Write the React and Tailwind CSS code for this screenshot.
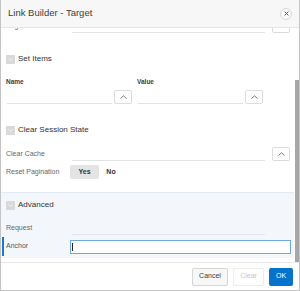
import React from "react";

const ChevronUp = () => (
    <svg width="7" height="4" viewBox="0 0 7 4" fill="none">
        <path d="M0.5 3.5 L3.5 0.8 L6.5 3.5" stroke="#6b6b6b" strokeWidth="0.9" />
    </svg>
);

const UpButton = () => (
    <button className="w-[18px] h-[14px] shrink-0 flex items-center justify-center border border-[#dcdcdc] rounded-[2px] bg-white">
        <ChevronUp />
    </button>
);

const SectionHeader = ({ title }) => (
    <div className="flex items-center h-[10px] pl-[5px] gap-[3px]">
        <div className="w-[9px] h-[9px] rounded-[1px] bg-[#d9d9d9] flex items-center justify-center">
            <svg width="5" height="3" viewBox="0 0 5 3" fill="none">
                <path d="M0.4 0.4 L2.5 2.5 L4.6 0.4" stroke="#f4f4f4" strokeWidth="0.9" />
            </svg>
        </div>
        <span className="text-[8px] text-[#333]">{title}</span>
    </div>
);

const FieldRow = ({ label, className = "" }) => (
    <div className={"flex items-center h-[14px] pl-[5px] pr-[4px] " + className}>
        <span className="w-[64px] shrink-0 text-[7px] text-[#666]">{label}</span>
        <div className="self-stretch flex-1 ml-[2px] border-b border-[#e3e3e3]" />
        <div className="w-[7px] shrink-0" />
        <div className="w-[18px] shrink-0" />
    </div>
);

const FieldRowWithButton = ({ label, className = "" }) => (
    <div className={"flex items-center h-[14px] pl-[5px] pr-[4px] " + className}>
        <span className="w-[64px] shrink-0 text-[7px] text-[#666]">{label}</span>
        <div className="self-stretch flex-1 ml-[2px] border-b border-[#e3e3e3]" />
        <div className="w-[7px] shrink-0" />
        <UpButton />
    </div>
);

const ItemColumn = () => (
    <div className="w-[126px] flex items-center gap-[2px] pl-[1px]">
        <div className="flex-1 h-[13px] border-b border-[#e3e3e3]" />
        <UpButton />
    </div>
);

export default function App() {
    return (
        <div className="w-[300px] h-[291px] flex flex-col bg-white border-x border-b border-[#c4c4c4] font-['Liberation_Sans',Arial,sans-serif] overflow-hidden">
            <div className="h-[28px] shrink-0 flex items-center justify-between pl-[7px] pr-[7px] bg-[#f7f7f7] border-b border-[#e6e6e6]">
                <span className="text-[9.5px] text-[#404040]">Link Builder - Target</span>
                <button className="w-[12px] h-[12px] rounded-full border border-[#d8d8d8] bg-[#f9f9f9] flex items-center justify-center">
                    <svg width="5" height="5" viewBox="0 0 5 5" fill="none">
                        <path d="M0.6 0.6 L4.4 4.4 M4.4 0.6 L0.6 4.4" stroke="#4a5a6a" strokeWidth="1" />
                    </svg>
                </button>
            </div>

            <div className="flex-1 flex min-h-0">
                <div className="flex-1 flex flex-col overflow-hidden">
                    <FieldRowWithButton label="Page" className="-mt-[9px]" />

                    <div className="mt-[21px]">
                        <SectionHeader title="Set Items" />
                    </div>

                    <div className="flex gap-[5px] pl-[5px] mt-[14px] h-[8px] items-center">
                        <span className="w-[126px] text-[6.5px] font-bold text-[#404040]">Name</span>
                        <span className="w-[126px] text-[6.5px] font-bold text-[#404040]">Value</span>
                    </div>
                    <div className="flex gap-[5px] pl-[5px] mt-[4px]">
                        <ItemColumn />
                        <ItemColumn />
                    </div>

                    <div className="mt-[21px]">
                        <SectionHeader title="Clear Session State" />
                    </div>

                    <FieldRowWithButton label="Clear Cache" className="mt-[12px]" />

                    <div className="flex items-center h-[14px] pl-[5px] mt-[4px]">
                        <span className="w-[64px] shrink-0 text-[7px] text-[#666]">Reset Pagination</span>
                        <div className="w-[29px] h-[14px] flex items-center justify-center rounded-[2px] bg-[#e4e4e4] text-[7px] font-bold text-[#333]">Yes</div>
                        <div className="w-[24px] h-[14px] flex items-center justify-center text-[7px] font-bold text-[#333]">No</div>
                    </div>

                    <div className="mt-[13px] bg-[#f3f7fc] border-t border-[#e2eaf4] pt-[7px] pb-[2px]">
                        <SectionHeader title="Advanced" />
                        <FieldRow label="Request" className="mt-[11px]" />
                        <div className="flex items-center h-[19px] mt-[2px] ml-[1px] border-l-2 border-[#1c77cf] pl-[2px] pr-[3px]">
                            <span className="w-[64px] shrink-0 text-[7px] text-[#555]">Anchor</span>
                            <div className="flex-1 h-[14px] border border-[#6fa8de] bg-white flex items-center pl-[1px]">
                                <div className="w-[1px] h-[8px] bg-[#222]" />
                            </div>
                        </div>
                    </div>
                </div>
                <div className="w-[5px] shrink-0 flex flex-col pt-[52px]">
                    <div className="flex-1 ml-[1px] bg-[#a7a7a7]" />
                </div>
            </div>

            <div className="h-[28px] shrink-0 flex items-center justify-end gap-[5px] pr-[6px] border-t border-[#e8e8e8]">
                <button className="w-[36px] h-[18px] rounded-[2px] border border-[#d6d6d6] bg-[#f7f7f7] text-[7px] text-[#404040]">Cancel</button>
                <button className="w-[31px] h-[18px] rounded-[2px] border border-[#ededed] bg-white text-[7px] text-[#c6c6c6]">Clear</button>
                <button className="w-[24px] h-[18px] rounded-[2px] bg-[#0572ce] text-[7px] text-white">OK</button>
            </div>
        </div>
    );
}
